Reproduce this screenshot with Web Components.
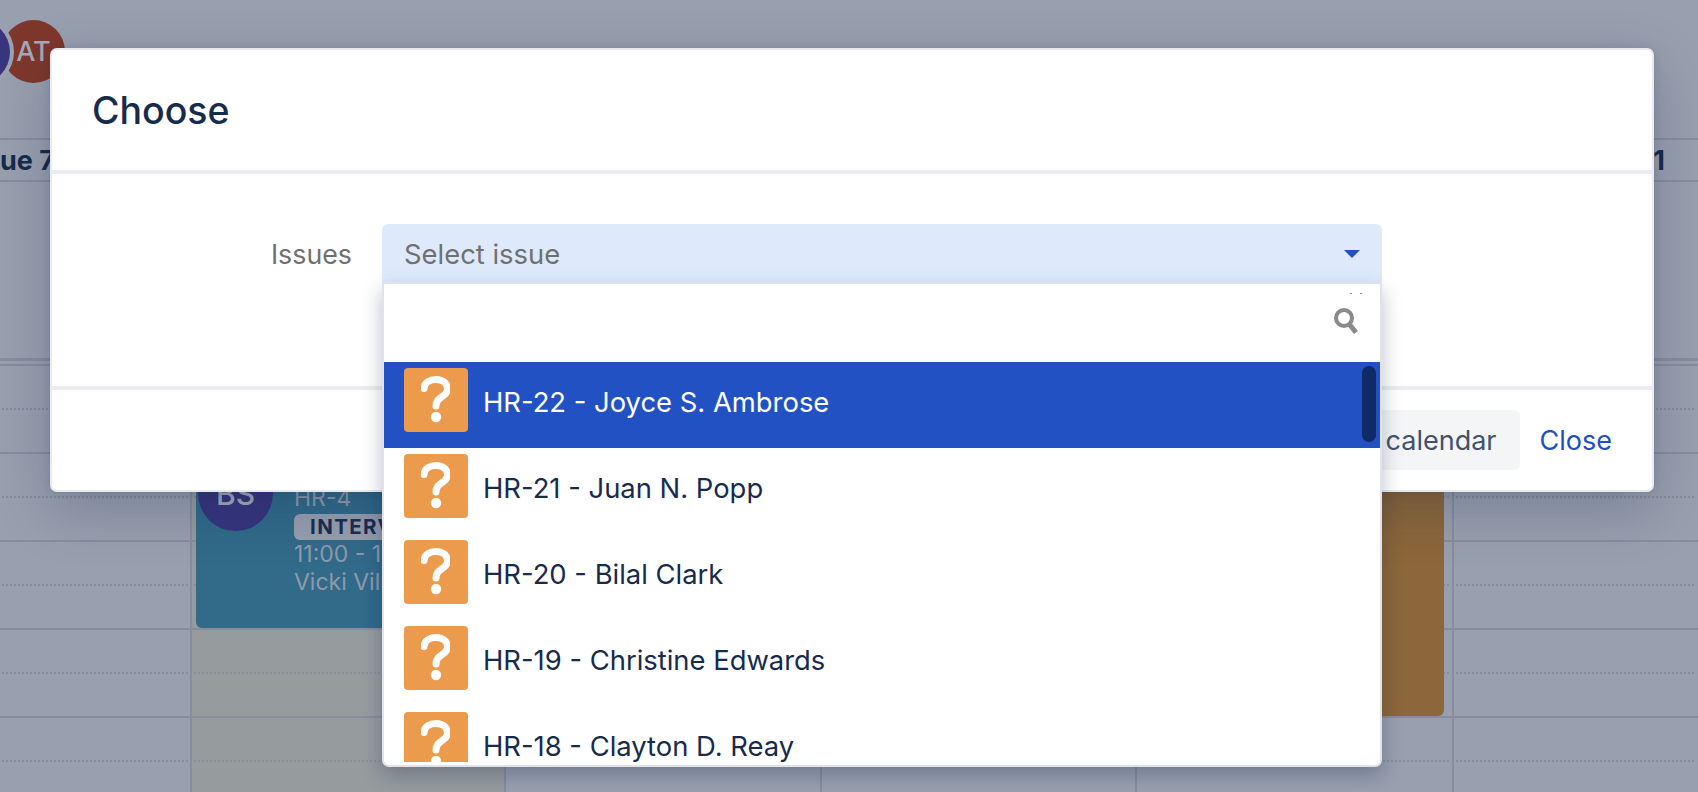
<!DOCTYPE html>
<html><head><meta charset="utf-8"><style>
html,body{margin:0;height:100%;overflow:hidden;background:#989fae;font-family:Inter,"Liberation Sans",sans-serif}
</style></head><body>
<cal-board></cal-board>
<choose-dialog>
  <span slot="title">Choose</span>
  <span slot="label">Issues</span>
  <issue-select slot="field" placeholder="Select issue">
    <issue-row active>HR-22 - Joyce S. Ambrose</issue-row>
    <issue-row>HR-21 - Juan N. Popp</issue-row>
    <issue-row>HR-20 - Bilal Clark</issue-row>
    <issue-row>HR-19 - Christine Edwards</issue-row>
    <issue-row>HR-18 - Clayton D. Reay</issue-row>
  </issue-select>
  <span slot="secondary">calendar</span>
  <span slot="close">Close</span>
</choose-dialog>
<script>
function el(name, css, html){
  customElements.define(name, class extends HTMLElement{
    constructor(){super();this.attachShadow({mode:'open'}).innerHTML='<style>'+css+'</style>'+(typeof html==='function'?html(this):html);}
  });
}
el('avatar-dot',`:host{display:flex;align-items:center;justify-content:center;width:var(--d,64px);height:var(--d,64px);border-radius:50%;color:#a3aab8;font:500 var(--fs,27px)/1 Inter,sans-serif;background:var(--bg);flex:none}`,`<slot></slot>`);
el('cal-cell',`:host{display:block;position:relative;box-sizing:border-box;border-right:2px solid #868d9d;border-bottom:2px solid #868d9d;height:88px;background:var(--cell,transparent)}
:host(.last){border-right:0}
.dots{position:absolute;left:2px;right:2px;top:42px;height:2px;background:repeating-linear-gradient(to right,#858c9c 0 2px,transparent 2px 4px)}`,`<div class="dots"></div>`);
el('cal-board',`
:host{display:block;position:absolute;inset:0;overflow:hidden;color:#172b4d}
.top{height:138px;box-sizing:border-box;padding-top:20px;display:flex;align-items:flex-start}
.first{margin-left:-54px;position:relative;z-index:1;box-shadow:0 0 0 4px #9aa1b0}
.second{margin-left:-8px;--d:63px}
.head{height:44px;box-sizing:border-box;border-top:2px solid #868d9d;border-bottom:2px solid #868d9d;display:flex;justify-content:space-between;align-items:center;font:700 27px/1 Inter,sans-serif;color:#172b4d}
.head span:last-child{margin-right:33px}
.allday{height:179px;box-sizing:border-box;border-bottom:3px solid #868d9d}
.wrap{position:relative;border-top:2px solid #868d9d;margin-top:3px}
.grid{display:grid;grid-template-columns:192px 314px 315.7px 315.6px 316.7px 1fr}
.today{--cell:#969b9e}
.card{position:absolute;box-sizing:border-box;border-radius:6px}
.blue{left:196px;top:72px;width:300px;height:190px;background:#326a8a}
.brown{left:1142px;top:72px;width:302px;height:278px;background:#8c673b}
.av{position:absolute;left:2px;top:18px;--d:75px;--fs:30px;--bg:#37357e}
.info{position:absolute;left:98px;top:46px;font:400 23px/28px Inter,sans-serif;color:#8e9aab;white-space:nowrap}
.tag{display:block;width:max-content;box-sizing:border-box;height:26px;margin:2px 0 0;padding:0 16px;border-radius:6px;background:#979fae;color:#1d2d52;font:700 20.5px/26px Inter,sans-serif;letter-spacing:1.4px}
`,()=>{
  let cells='';
  for(let r=0;r<5;r++)for(let c=0;c<6;c++)cells+=`<cal-cell class="${c==1?'today':''} ${c==5?'last':''}"></cal-cell>`;
  return `<div class="top"><avatar-dot class="first" style="--bg:#37357e"></avatar-dot><avatar-dot class="second" style="--bg:#7f372c">AT</avatar-dot></div>
<div class="head"><span>ue 7</span><span>1</span></div>
<div class="allday"></div>
<div class="wrap"><div class="grid">${cells}</div>
<div class="card blue"><avatar-dot class="av">BS</avatar-dot><div class="info">HR-4<span class="tag">INTERVIEW</span>11:00 - 12:00<br>Vicki Villa</div></div>
<div class="card brown"></div></div>`;
});
el('choose-dialog',`
:host{position:absolute;left:50px;top:48px;width:1604px;height:444px;box-sizing:border-box;background:#fff;border:2px solid #e9eaef;border-radius:7px;display:flex;flex-direction:column;color:#172b4d;box-shadow:0 18px 56px rgba(9,30,66,.22),0 0 10px rgba(9,30,66,.12)}
header{height:120px;box-sizing:border-box;padding:2px 0 0 40px;display:flex;align-items:center;font:500 37.5px/1 Inter,sans-serif;color:#172b4d;flex:none}
.body{flex:1;border-top:4px solid #ebecf0;border-bottom:4px solid #ebecf0;padding-top:50px;display:flex;align-items:flex-start;gap:30px;box-sizing:border-box}
.lab{width:300px;height:60px;text-align:right;font:400 26.8px/60px Inter,sans-serif;color:#707070;flex:none}
footer{height:100px;flex:none;box-sizing:border-box;padding:20px 40px 20px 0;display:flex;justify-content:flex-end;align-items:stretch;font:400 27px/62px Inter,sans-serif}
.btn{background:#f4f5f7;border-radius:6px;color:#42526e;padding:0 23px 0 86px}
.close{color:#1e50c0;padding-left:20px}
`,`<header><slot name="title"></slot></header>
<div class="body"><div class="lab"><slot name="label"></slot></div><slot name="field"></slot></div>
<footer><div class="btn"><slot name="secondary"></slot></div><div class="close"><slot name="close"></slot></div></footer>`);
el('issue-select',`
:host{display:block;position:relative;z-index:2;width:1000px;height:60px;font-family:Inter,sans-serif}
.box{height:60px;box-sizing:border-box;background:#deeafc;border-radius:6px 6px 0 0;padding:0 22px;display:flex;align-items:center;justify-content:space-between;color:#707070;font:400 27.4px/60px Inter,sans-serif}
.arrow{width:0;height:0;border-left:8px solid transparent;border-right:8px solid transparent;border-top:8px solid #2251c4}
.drop{position:absolute;left:0;top:58px;width:1000px;height:485px;box-sizing:border-box;background:#fff;border:2px solid #e2e3e9;border-radius:0 0 7px 7px;box-shadow:0 8px 20px rgba(9,30,66,.28);padding-bottom:3px}
.search{height:78px;position:relative;display:flex;justify-content:flex-end;align-items:center;padding:0 21px 4px 0;box-sizing:border-box}
.dots{position:absolute;right:18px;top:9px;display:flex;gap:8px}
.dots i{width:2px;height:1px;background:#8a8a8a}
.list{height:400px;overflow:hidden;position:relative}
.thumb{position:absolute;right:4px;top:4px;width:14px;height:76px;border-radius:7px;background:#0f2a66}
`,h=>`<div class="box"><span>${h.getAttribute('placeholder')}</span><span class="arrow"></span></div>
<div class="drop"><div class="search"><div class="dots"><i></i><i></i></div>
<svg width="26" height="28" viewBox="0 0 26 28"><circle cx="11" cy="11" r="8" fill="none" stroke="#8a8a8a" stroke-width="4"/><path d="M16.5 17.5 23 25.5" stroke="#8a8a8a" stroke-width="5" fill="none"/></svg></div>
<div class="list"><slot></slot><div class="thumb"></div></div></div>`);
el('issue-row',`
:host{display:flex;height:86px;box-sizing:border-box;padding:6px 0 0 20px;gap:15px;color:#172b4d;font:400 27.4px/1 Inter,sans-serif;background:#fff}
:host([active]){background:#2251c4;color:#fff}
svg{flex:none;display:block}
span{padding-top:16px;line-height:36px;white-space:nowrap}
`,`<svg width="64" height="64" viewBox="0 0 64 64"><rect width="64" height="64" rx="4" fill="#ec9a4b"/><g filter="url(#s)"><path d="M20 20.5C20.5 14 26 11.5 32 11.5 39 11.5 43.5 15.5 43.5 21 43.5 27 37 28.5 34 32 32.6 33.8 32 36 32 38" fill="none" stroke="#fff" stroke-width="7" stroke-linecap="round"/><circle cx="32" cy="49" r="5.2" fill="#fff"/></g><defs><filter id="s"><feGaussianBlur stdDeviation=".5"/></filter></defs></svg><span><slot></slot></span>`);
</script>
</body></html>
